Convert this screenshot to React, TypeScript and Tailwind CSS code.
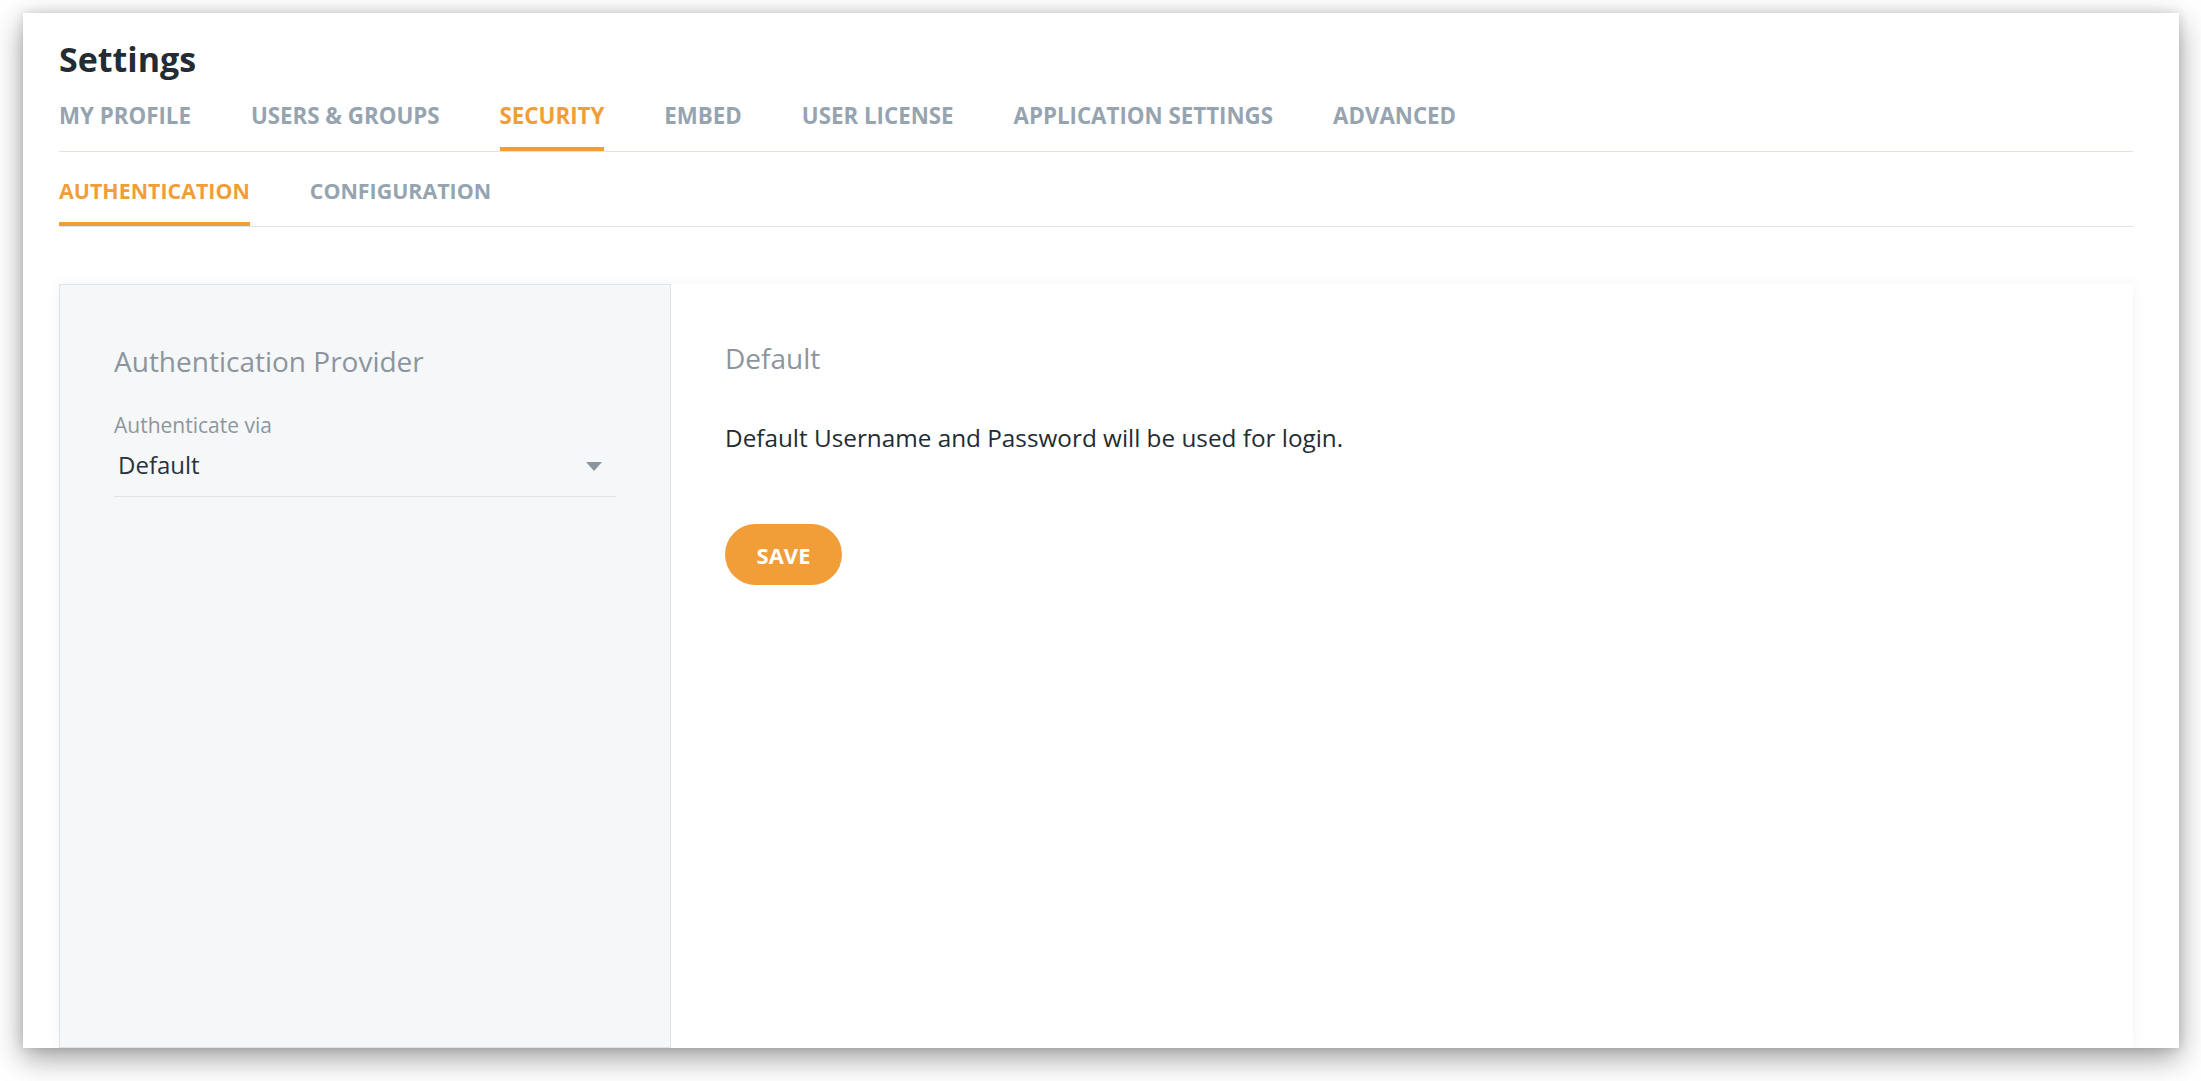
const mainTabs = [
  "MY PROFILE",
  "USERS & GROUPS",
  "SECURITY",
  "EMBED",
  "USER LICENSE",
  "APPLICATION SETTINGS",
  "ADVANCED",
];

const subTabs = ["AUTHENTICATION", "CONFIGURATION"];

function TabBar({
  items,
  active,
  className,
  textClass,
}: {
  items: string[];
  active: string;
  className: string;
  textClass: string;
}) {
  return (
    <nav className={`flex gap-[60px] border-b border-[#dee4e9] ${className}`}>
      {items.map((t) => (
        <div
          key={t}
          className={`pb-[20px] border-b-4 leading-[22px] font-bold whitespace-nowrap ${textClass} ${
            t === active ? "border-[#f29e38] text-[#f29e38]" : "border-transparent text-[#96a4b0]"
          }`}
        >
          {t}
        </div>
      ))}
    </nav>
  );
}

export default function App() {
  return (
    <div className="w-[2201px] h-[1081px] bg-white overflow-hidden font-['Open_Sans',sans-serif]">
      <div className="ml-[23px] mt-[13px] w-[2156px] h-[1035px] bg-white overflow-hidden flex flex-col pl-[36px] pr-[46px] shadow-[0_10px_28px_rgba(0,0,0,0.38),0_0_10px_rgba(0,0,0,0.12)]">
        <h1 className="mt-[28px] text-[34px] leading-[36px] font-bold text-[#232c33]">Settings</h1>

        <TabBar items={mainTabs} active="SECURITY" className="mt-[28px]" textClass="text-[22.3px]" />
        <TabBar items={subTabs} active="AUTHENTICATION" className="mt-[28px]" textClass="text-[21.4px]" />

        <div className="mt-[57px] flex flex-1 shadow-[0_0_14px_rgba(0,0,0,0.05)]">
          {/* provider picker */}
          <div className="w-[612px] shrink-0 bg-[#f5f7f9] border border-[#dce3e9] px-[54px] pt-[62px]">
            <div className="text-[28px] leading-[28px] text-[#8c959d]">Authentication Provider</div>
            <div className="mt-[40px] text-[21px] leading-[21px] text-[#8d969e]">Authenticate via</div>
            <div className="mt-[17px] pb-[19px] border-b border-[#dce3e9] flex items-center justify-between">
              <span className="pl-[4px] text-[24px] leading-[24px] text-[#29333a]">Default</span>
              <svg width="16" height="9" viewBox="0 0 16 9" className="mr-[14px] mt-[3px]">
                <path d="M0 0 L16 0 L8 9 Z" fill="#8a969f" />
              </svg>
            </div>
          </div>

          {/* provider details */}
          <div className="flex-1 bg-white pl-[54px] pt-[60px]">
            <div className="text-[28px] leading-[28px] text-[#8c959d]">Default</div>
            <p className="mt-[54px] text-[24.3px] leading-[24px] text-[#232c33]">
              Default Username and Password will be used for login.
            </p>
            <button className="mt-[74px] h-[61px] w-[117px] rounded-full bg-[#f29e38] text-white text-[22px] leading-[22px] font-bold flex items-center justify-center">
              SAVE
            </button>
          </div>
        </div>
      </div>
    </div>
  );
}
